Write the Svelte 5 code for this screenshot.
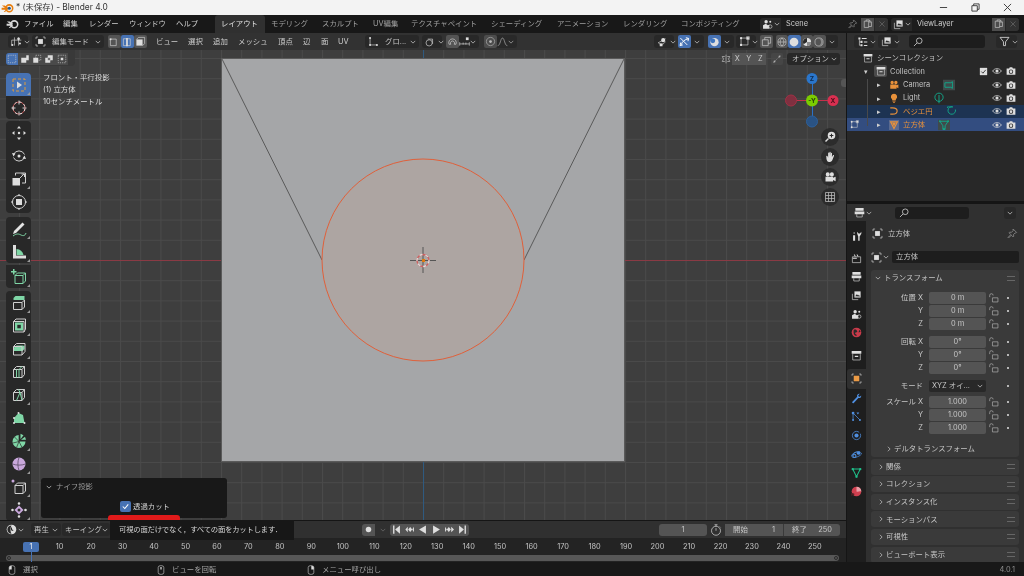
<script>
  const circ = (x, y, r) => `M${x - r} ${y}a${r} ${r} 0 1 0 ${2 * r} 0a${r} ${r} 0 1 0 ${-2 * r} 0z`;
  const cube = 'M2.5 5.5h8.5v8h-8.5zM2.5 5.5l3-3h8v8l-2.5 3M11 5.5l2.5-3';
  const G = {
    select: [['od', 'M2 2h12v12H2z'], ['fl', 'M6 4.5v7l5-3.5z']],
    cursor: [['rs', circ(8, 8, 6)], ['wd', circ(8, 8, 6)], ['st', 'M8 .5v4M8 11.5v4M.5 8h4M11.5 8h4']],
    move: [['fl', 'M8 1l2 2.5H6zM8 15l2-2.5H6zM1 8l2.5-2v4zM15 8l-2.5-2v4z' + circ(8, 8, 1.2)]],
    rotate: [['st', 'M2.5 6.5a6 6 0 0 1 11 0M13.5 9.5a6 6 0 0 1-11 0'], ['fl', 'M1 5l3.5 .5-2 3zM15 11l-3.5-.5 2-3z' + circ(8, 8, 1.5)]],
    scale: [['fl', 'M1.5 7h7.5v7.5H1.5z'], ['st', 'M4.5 4.5V2h10v10H11M9 7l4-4M10.5 3h3v3']],
    transform: [['st', circ(8, 8, 6.5)], ['fl', 'M5 5h6v6H5zM8 0l1.5 1.5h-3zM8 16l1.5-1.5h-3zM0 8l1.5-1.5v3zM16 8l-1.5-1.5v3z']],
    annotate: [['tw', 'M3 10L11.5 1.5l2 2L5 12l-3 1z'], ['gs', 'M2 15c4-3 6-2 8-1s4 1 5-2']],
    measure: [['fl', 'M2 1h3v10.5h10V14.5H2z'], ['gr', 'M5.5 5a8 8 0 0 1 7 6h-7z']],
    addcube: [['gs', 'M4 6.5h8v8H4zM4 6.5l2.5-2.5h8v8l-2.5 2.5M12 6.5l2.5-2.5'], ['gr', 'M2 0h1.5v2H5.5v1.5H3.5V5.5H2V3.5H0V2h2z']],
    extrude: [['gr', 'M2.5 3l2-2h9v4h-11z'], ['st', 'M2.5 7.5h8.5v7h-8.5zM11 7.5l2.5-2.5v7l-2.5 2.5']],
    inset: [['gr', 'M4 4.5h8v8H4z'], ['dk', 'M6.3 6.8h3.5v3.5H6.3z'], ['st', 'M2.5 3.5h10.5v10.5H2.5zM2.5 3.5l2.5-2.5h9.5v10l-1.5 3']],
    bevel: [['gr', 'M2.5 7l3-2.5h6l2 .5v3l-2 2H2.5z'], ['st', 'M2.5 5.5h8.5v8.5H2.5zM5.5 2.5h8.5v8l-3 3.5M2.5 5.5l3-3']],
    loop: [['st', cube], ['gs', 'M5.5 5.5v8M8 5.5v8M8 5.5l3-3']],
    knife: [['st', cube], ['gs', 'M7.5 2.5L9 5.5 5.5 13.5M9 5.5L11 13']],
    poly: [['gr', 'M3 8L7.5 3 12 5l1.5 8H3z'], ['fl', circ(3, 13, 1) + circ(13.5, 13, 1) + circ(7.5, 3, 1) + circ(3, 8, 1)]],
    spin: [['gr', 'M8 2a6.5 6.5 0 1 0 6.5 6.5H8zM9.5 .8v5.5l3-4zM10 6.8l4-3 1 3z'], ['dk2', 'M8 2v6.5L3.5 4M8 8.5L2 10M8 8.5L5.5 14.5M8 8.5l3 6']],
    smooth: [['pu', circ(8, 8, 6.5)], ['pd', 'M1.5 8c4 1.5 9 1.5 13 0M8 1.5c-1.5 4-1.5 9 0 13']],
    shrink: [['st', 'M4 6.5h8v8H4zM4 6.5l2.5-2.5h8v8l-2.5 2.5M12 6.5l2.5-2.5'], ['pu', circ(2, 2, 1.5)]],
    shear: [['pu', 'M8 3.5l4.5 4.5-4.5 4.5L3.5 8z'], ['fl', circ(8, 1.5, 1.3) + circ(8, 14.5, 1.3) + circ(1.5, 8, 1.3) + circ(14.5, 8, 1.3)], ['dk', circ(8, 8, 1.5)]],
    obj: [['fl', 'M4.5 4.5h7v7h-7z'], ['st', 'M1.5 4.5v-3h3M11.5 1.5h3v3M14.5 11.5v3h-3M4.5 14.5h-3v-3']],
    objo: [['ofl', 'M4 4h8v8H4z'], ['st', 'M1.5 4v-2.5H4M12 1.5h2.5V4M14.5 12v2.5H12M4 14.5H1.5V12']],
    editor: [['st', 'M1 14V6h14M5 2v12M11 2v12'], ['fl', circ(11, 4, 2) + circ(2, 13, 1.5) + circ(13, 11, 1.5)]],
    otype: [['fl', 'M2 2h3v3H2zM7 3h7v1.5H7zM5 7h3v3H5zM10 8h5v1.5h-5zM5 12h3v3H5zM10 13h5v1.5h-5z'], ['st', 'M3.5 5v8.5H5M3.5 8.5H5']],
    tools: [['fl', 'M3 6v8h3V6zM4 1.5v3h1v-3z'], ['fl', 'M10.5 8v6h2V8L15 4V1l-2 2.5h-2L9 1v3z']],
    render: [['st', 'M2 5.5h12v8.5H2z'], ['fl', 'M4 2h1.5l1.5 3H5.5zM8 2h1.5L11 5H9.5zM2.5 7h6v1.5h-6z']],
    output: [['fl', 'M2 1.5h12v4H2zM1 6.5h14v4H1z'], ['st', 'M4 10.5v4h8v-4']],
    vlayer: [['st', 'M2 5.5v8.5h8.5'], ['fl', 'M5 2h9v9H5z'], ['dk', 'M6 9l2.5-3 2 2 1-1 1.5 2.5z']],
    scene: [['fl', circ(6, 4, 2.5) + 'M1.5 14V9l4-2 3 2 2-.5V14z'], ['st', circ(12, 11, 2.5)], ['fl', circ(12, 4, 1.5)]],
    world: [['rf', circ(8, 8, 7)], ['dk', 'M4 4c3-1 4 0 5 2s-3 1-3 3 3 1 2 4c-3 0-5-3-4-9zM12 4l2 3-3 1z']],
    coll: [['st', 'M2.5 6v8.5h11V6'], ['fl', 'M1 1.5h14v4H1zM5.5 8.5h5v1.5h-5z']],
    wrench: [['bf', 'M14.8 3.5c.5 2.5-1.8 4.5-4 3.8L4 14.5c-1.2 1-3-.6-2-1.8L9 5.5C8 3 10 .8 12.8 1.2L10.5 3.5l.7 1.5 1.5.5z']],
    part: [['bs', 'M3 3v10M3 3l10 10'], ['bf', circ(3, 3, 2) + circ(3, 13, 1.5) + circ(13, 13, 1.5) + 'M8 2h4l-2 3z']],
    physics: [['bs', circ(8, 8, 6)], ['bf', circ(8, 8, 3)], ['dkb', 'M12 1l3 3-3 3z']],
    constr: [['bs', 'M1 10c2-7 12-7 14-4s-10 8-13 6 4-9 11-8'], ['bf', circ(5, 10, 3)], ['dk', circ(5, 10, 1.5)], ['bf', circ(11, 6, 2.5)]],
    data: [['gs2', 'M2.5 3h11L8 14z'], ['gf', circ(2.5, 3, 1.7) + circ(13.5, 3, 1.7) + circ(8, 14, 1.7)]],
    mat: [['mr', circ(8, 8, 7)], ['md', 'M8 1a7 7 0 0 1 7 7c-3-1.5-4 1-7 0z'], ['mk', 'M2.5 11.5c3-2 8-2 11 0a7 7 0 0 1-11 0z']],
    pin: [['sd', 'M9 1.5l5 5-1 1-1-.5-2.5 2.5.3 2.5-1 1-2.5-2.5-4 4-.8-.8 4-4L3 7l1-1 2.5.3L9 3.8l-.5-1z']],
    lock: [['lk', 'M1 6V3.5a2.5 2.5 0 0 1 5 0M5 7h8v6H5z']],
    eye: [['tw2', 'M1 8c3-5 11-5 14 0-3 5-11 5-14 0z'], ['fl', circ(8, 8, 2.5)]],
    cam: [['fl', 'M1 4h4l1-2h4l1 2h4v10H1z'], ['dk', circ(8, 9, 3.5)], ['fl', circ(8, 9, 2.2)]],
    check: [['fl', 'M1.5 1.5h13v13h-13z'], ['dks', 'M4 8l3 3 5-6']],
    search: [['ts', circ(10, 6, 4.5) + 'M6.5 9.5L1.5 14.5']],
    filter: [['ts', 'M1.5 2h13L9.5 8.5V14h-3V8.5z']],
    camera: [['of', circ(5, 4, 2.7) + circ(11, 4, 2.7) + 'M2 7h10v7H2zM12 8.5l3-1.5v6l-3-1.5z']],
    bulb: [['of', 'M8 1a5 5 0 0 1 3 9v1.5H5V10A5 5 0 0 1 8 1zM5.5 12.5h5v1h-5zM6.5 14.5h3v1h-3z']],
    curve: [['os', 'M2 3h4c4 0 7 1.5 7 5s-3 5-7 5H2']],
    meshtri: [['hb', 'M0 0h16v16H0z'], ['os', 'M2.5 3h11L8 13.5z'], ['of', 'M5 4.5h6L8 10.5z']],
    tagcam: [['hg', 'M0 1h16v14H0z'], ['ts2', 'M2.5 5h8l2-1.5v9l-2-1.5h-8z']],
    tagbulb: [['ts2', circ(8, 7, 5.5) + 'M8 4v11']],
    tagcurve: [['ts2', 'M12.5 6a5 5 0 1 1-3.5-3.5H3M3 2l-1.5 1 1.5 1']],
    tagmesh: [['hg', 'M0 1h16v14H0z'], ['ts2', 'M2.5 3h11L9.5 9v5h-3V9z'], ['tg', circ(2.5, 3, 1.2) + circ(13.5, 3, 1.2) + circ(8, 13, 1.2)]],
    mouseL: [['st', 'M3.5 4a4 3 0 0 1 4-3h1a4 3 0 0 1 4 3v8a4 3 0 0 1-4 3h-1a4 3 0 0 1-4-3z'], ['fl', 'M3.5 7V4a4 3 0 0 1 4-3v6z']],
    mouseM: [['st', 'M3.5 4a4 3 0 0 1 4-3h1a4 3 0 0 1 4 3v8a4 3 0 0 1-4 3h-1a4 3 0 0 1-4-3z'], ['fl', 'M7 3h2v4H7z']],
    mouseR: [['st', 'M3.5 4a4 3 0 0 1 4-3h1a4 3 0 0 1 4 3v8a4 3 0 0 1-4 3h-1a4 3 0 0 1-4-3z'], ['fl', 'M12.5 7V4a4 3 0 0 0-4-3v6z']],
    mode1: [['st', 'M2 4.5h8.5V14H2z'], ['fl', 'M1 3.5h2.5v2.5H1z']],
    mode2: [['st', 'M2 4h10v10H2z'], ['fl', 'M6 3h2.5v12H6z']],
    mode3: [['fl', 'M2 5h9v9H2z'], ['st', 'M2 5l3-3h9v9l-3 3']],
    box: [['sdash', 'M2 2h12v12H2z']],
    union: [['fl', 'M2 6h8V2h4v8h-4v4H2z']],
    sub: [['sdash', 'M6 2h8v8H6z'], ['fl', 'M2 6h8v8H2z']],
    diff: [['st', 'M6 6h4v4H6z'], ['fl', 'M6 2h8v8h-4V6H6zM2 6h4v4h4v4H2z']],
    inter: [['sdash', 'M2 2h12v12H2z'], ['fl', 'M6 6h4v4H6z']],
    orient: [['st', 'M3 13L3 3M3 13h10'], ['fl', circ(3, 3, 1.5) + circ(13, 13, 1.5) + circ(3, 13, 1.5)]],
    pivot: [['st', circ(6, 10, 4.5) + 'M4 4.5h7v7']],
    snap: [['st', 'M3 12a5.5 5.5 0 1 1 10 0M5.5 12a3 3 0 1 1 5 0M3 12h2.5M10.5 12H13']],
    snapb: [['st', 'M1 9v5M15 9v5M1 11.5h14M6 9.5v3M10 9.5v3'], ['fl', 'M10 2h4v4h-4z']],
    prop: [['st', circ(8, 8, 6)], ['fl', circ(8, 8, 2)]],
    falloff: [['st', 'M1 14c4 0 4-11 7-11s3 11 7 11']],
    vis: [['st', 'M1.5 10l11-6M2 10c3 3 8 3 10-2'], ['fl', circ(9, 6, 3) + 'M4 11h4v4H4z']],
    gizmo: [['ws', 'M2 3l10 10M3 13c2-5 5-8 11-9M10 2.5l4 1-1 4M2.5 9.5l-1 4.5 4-1']],
    overlay: [['fl', circ(8, 9, 6)], ['bl2', circ(5.5, 7, 3.5)]],
    editm: [['st', 'M3 3h10v10H3z'], ['fl', circ(3, 3, 1.7) + circ(13, 3, 1.7) + circ(3, 13, 1.7)], ['st', 'M11 1h4v4h-4z']],
    xray: [['st', 'M2 5.5h8.5V14H2zM5.5 2H14v8.5h-3.5M5.5 2v3.5']],
    wire: [['st', circ(8, 8, 6.5) + 'M1.5 8h13M8 1.5c-4 4-4 9 0 13M8 1.5c4 4 4 9 0 13']],
    solid: [['fl', circ(8, 8, 7)]],
    matp: [['fl', circ(8, 8, 6.5)], ['dk', 'M8 1.5A6.5 6.5 0 0 0 2.5 11.5L8 8z'], ['gy', 'M8 8h6.5a6.5 6.5 0 0 1-6.5 6.5z']],
    rend: [['st', circ(8, 8, 6.5)], ['gy', 'M8 1.5A6.5 6.5 0 0 1 8 14.5 8 8 0 0 0 8 1.5z']],
    sym: [['st', 'M8 1v14M6 4H2l2 4-2 4h4M10 4h4l-2 4 2 4h-4']],
    prot: [['sdash', 'M2 14L14 2'], ['fl', circ(4, 12, 1.5) + circ(12, 4, 1.5)]],
    zoom: [['fl', circ(10, 6, 5)], ['dk', 'M7.5 5.3h1.8V3.5h1.4v1.8h1.8v1.4h-1.8v1.8H9.3V6.7H7.5z'], ['th', 'M6 10L2 14']],
    hand: [['fl', 'M3 7c0-1 1.5-1 1.8 0l.7 2V3c0-1.2 1.5-1.2 1.6 0l.1 3.5V2c0-1.2 1.7-1.2 1.7 0v4.5l.3-3.5c.2-1 1.6-1 1.5.3L10.5 8l1.3-2c.6-1 2-.5 1.5.6l-2 5c-1 2.5-2.5 3-4.5 3-2.5 0-3-2-3.5-4z']],
    vcam: [['fl', circ(5, 4.5, 2.7) + circ(10.5, 4.5, 2.7) + 'M2 7.5h10V14H2zM12 9l3.5-1.5v6L12 12z']],
    ogrid: [['tg2', 'M2 2h12v12H2zM6 2v12M10 2v12M2 6h12M2 10h12']],
    clock: [['fl', circ(8, 8, 7)], ['dk', 'M8 2a6 6 0 0 0 0 12c-2-3-2-9 0-12z'], ['dks', 'M8 5v3.5l2.5 1']],
    rec: [['fl', circ(8, 8, 4)]],
    timer: [['st', circ(8, 9, 6) + 'M8 9V5.5M8 3V1M6 1h4M13 3.5l1 1']],
    jumpS: [['fl', 'M3 2h2v12H3zM13 2v12L6 8z']],
    keyP: [['fl', 'M2 8l3.5-4v8zM6 8l3-3.5L12 8l-3 3.5zM14.5 4v8L12 8z']],
    playR: [['fl', 'M13 2v12L3 8z']],
    playF: [['fl', 'M3 2v12l10-6z']],
    keyN: [['fl', 'M1.5 4v8L4 8zM4 8l3-3.5L10 8l-3 3.5zM10.5 4v8l4-4z']],
    jumpE: [['fl', 'M11 2h2v12h-2zM3 2v12l7-6z']],
    clo: [['tg2', 'M3 3l10 10M13 3L3 13']],
    copy: [['st', 'M2 3.5h7v10H2zM5 3.5V1.5h5l3.5 3.5v7H9M10 1.5V5h3.5']],
  };
  const menu = [['ファイル', 39], ['編集', 26], ['レンダー', 40], ['ウィンドウ', 47]];
  const tabs = [['レイアウト', 50, true], ['モデリング', 51], ['スカルプト', 51], ['UV編集', 38], ['テクスチャペイント', 80], ['シェーディング', 66], ['アニメーション', 66], ['レンダリング', 58], ['コンポジティング', 75]];
  const vmenu = [['ビュー', 32], ['選択', 25], ['追加', 25], ['メッシュ', 40], ['頂点', 25], ['辺', 18], ['面', 17], ['UV', 20]];
  const tgroups = [['select', 'cursor'], ['move', 'rotate', 'scale', 'transform'], ['annotate', 'measure'], ['addcube'], ['extrude', 'inset', 'bevel', 'loop', 'knife', 'poly', 'spin', 'smooth', 'shrink', 'shear']];
  const noCorner = ['cursor', 'move', 'rotate', 'transform', 'poly'];
  const rows = [
    { name: 'シーンコレクション', icon: 'coll', indent: 14, noArrow: true },
    { name: 'Collection', icon: 'coll', indent: 17, arrow: '▾', box: true, check: true },
    { name: 'Camera', icon: 'camera', indent: 30, arrow: '▸', tag: 'tagcam' },
    { name: 'Light', icon: 'bulb', indent: 30, arrow: '▸', tag: 'tagbulb' },
    { name: 'ベジエ円', icon: 'curve', indent: 30, arrow: '▸', tag: 'tagcurve', cls: 'sel', orange: true },
    { name: '立方体', icon: 'meshtri', indent: 30, arrow: '▸', tag: 'tagmesh', cls: 'act', orange: true },
  ];
  const ptabs = [['tools', 'a'], ['render', 'b'], ['output', 'c'], ['vlayer', 'c'], ['scene', 'c'], ['world', 'c'], ['coll', 'd'], ['objo', 'e'], ['wrench', 'f'], ['part', 'c'], ['physics', 'c'], ['constr', 'c'], ['data', 'c'], ['mat', 'c']];
  const xform = [
    [['位置 X', '0 m'], ['Y', '0 m'], ['Z', '0 m']],
    [['回転 X', '0°'], ['Y', '0°'], ['Z', '0°']],
  ];
  const scale = [['スケール X', '1.000'], ['Y', '1.000'], ['Z', '1.000']];
  const panels = ['関係', 'コレクション', 'インスタンス化', 'モーションパス', '可視性', 'ビューポート表示'];
  const marks = [10, 20, 30, 40, 50, 60, 70, 80, 90, 100, 110, 120, 130, 140, 150, 160, 170, 180, 190, 200, 210, 220, 230, 240, 250];
  const transport = ['jumpS', 'keyP', 'playR', 'playF', 'keyN', 'jumpE'];
  const fx = (f) => 59.6 + (f - 10) * 3.147;
  const chev = 'M1 1l3 3 3-3';
</script>

{#snippet g(name, size = 12)}
  <svg class="g" viewBox="0 0 16 16" width={size} height={size}>
    {#each G[name] as [c, d]}<path class={c} {d} />{/each}
  </svg>
{/snippet}
{#snippet v()}
  <svg class="chev" viewBox="0 0 8 5" width="6" height="4"><path d={chev} /></svg>
{/snippet}
{#snippet logo(col, eye)}
  <svg viewBox="0 0 16 14" width="13" height="11">
    <path fill={col} d="M.5 7.2h4.3L.8 4.3h3.7L8.5 7v2.5L4.8 12.8H3.2L5.8 9.8H.5z" />
    <circle fill="none" stroke={col} stroke-width="2" cx="10.3" cy="8" r="4.3" />
    <circle fill={eye} cx="10.3" cy="8" r="2" />
  </svg>
{/snippet}
{#snippet lockrow()}
  <span class="lockc">{@render g('lock', 11)}</span><i class="dot"></i>
{/snippet}

<div class="app">
  <header class="title">
    {@render logo('#e87d0d', '#265787')}
    <span class="ttext">* (未保存) - Blender 4.0</span>
    <div class="winctl">
      <svg viewBox="0 0 10 10" width="9" height="9"><path d="M1 5h8" /></svg>
      <svg viewBox="0 0 10 10" width="9" height="9"><path d="M1 3h6v6H1zM3 3V1h6v6H7" /></svg>
      <svg viewBox="0 0 10 10" width="9" height="9"><path d="M1 1l8 8M9 1l-8 8" /></svg>
    </div>
  </header>

  <nav class="topbar">
    <div class="blogo">{@render logo('#d8d8d8', '#181818')}</div>
    {#each menu as [t, w]}<span class="mi" style:width="{w}px">{t}</span>{/each}
    <span class="mi help">ヘルプ</span>
    <div class="tabs">
      {#each tabs as [t, w, on]}<span class="tab" class:on style:width="{w}px">{t}</span>{/each}
    </div>
    <div class="selector scene">
      <span class="selic">{@render g('scene', 11)}{@render v()}</span>
      <span class="selname">Scene</span>
      <span class="selpin">{@render g('pin', 10)}</span>
      <span class="selbtn">{@render g('copy', 10)}</span>
      <span class="selbtn dim">{@render g('clo', 8)}</span>
    </div>
    <div class="selector layer">
      <span class="selic">{@render g('vlayer', 11)}{@render v()}</span>
      <span class="selname">ViewLayer</span>
      <span class="selbtn">{@render g('copy', 10)}</span>
      <span class="selbtn dim">{@render g('clo', 8)}</span>
    </div>
  </nav>

  <div class="main">
    <div class="left">
      <section class="viewport">
        <svg class="scene3d" viewBox="0 33 846 487" width="846" height="487">
          <defs>
            <pattern id="grid" x="625" y="58" width="20.2" height="20.2" patternUnits="userSpaceOnUse">
              <path d="M0 .5H20.2M.5 0V20.2" fill="none" stroke="#4a4a4a" stroke-width="1" />
            </pattern>
          </defs>
          <rect x="0" y="33" width="846" height="487" fill="url(#grid)" />
          <path d="M0 260.5H221M625 260.5H846" stroke="#8a3a44" stroke-width="1" />
          <path d="M423.5 50V58M423.5 462V520" stroke="#2f5a80" stroke-width="1" />
          <rect x="221.5" y="58.5" width="403" height="403" fill="#a5a6a8" stroke="#5a5a5a" stroke-width="1" />
          <path d="M222 59L322 260M624 59L524 260" fill="none" stroke="#5a5a5a" stroke-width="1" />
          <circle cx="423" cy="260" r="101" fill="#ada5a2" stroke="#e0603a" stroke-width="1" />
          <path d="M423 247V273M410 260.5H436" stroke="#555" stroke-width="1" />
          <circle cx="423" cy="260.5" r="6" fill="none" stroke="#d06060" stroke-width="1.3" />
          <circle cx="423" cy="260.5" r="6" fill="none" stroke="#dddddd" stroke-width="1.3" stroke-dasharray="3 3" />
          <rect x="422" y="259" width="3" height="3" fill="#e07a10" />
          <path d="M791 100.5H833" stroke="#c5304a" stroke-width="1" />
          <path d="M812.5 78V121" stroke="#2a72c8" stroke-width="1" />
          <circle cx="791" cy="100.5" r="5.5" fill="#803040" stroke="#a03045" />
          <circle cx="812" cy="121.5" r="5.5" fill="#2a5384" stroke="#2c5f9a" />
          <circle cx="812" cy="78.5" r="5.5" fill="#2a76cc" />
          <circle cx="833" cy="100.5" r="5.5" fill="#d92f50" />
          <circle cx="812" cy="100.5" r="6" fill="#7bcc00" />
        </svg>

        <div class="vhead">
          <span class="btn first">{@render g('editor', 11)}{@render v()}</span>
          <span class="btn modesel">{@render g('obj', 11)}<span class="bl">編集モード</span>{@render v()}</span>
          <span class="seg">
            <span class="segb">{@render g('mode1', 11)}</span>
            <span class="segb on">{@render g('mode2', 11)}</span>
            <span class="segb">{@render g('mode3', 11)}</span>
          </span>
          <span class="vmenu">
            {#each vmenu as [t, w]}<span class="vm" style:width="{w}px">{t}</span>{/each}
          </span>
          <span class="btn orient">{@render g('orient', 11)}<span class="bl">グロ...</span>{@render v()}</span>
          <span class="btn pivot">{@render g('pivot', 11)}{@render v()}</span>
          <span class="btn snap"><span class="tog">{@render g('snap', 11)}</span>{@render g('snapb', 11)}{@render v()}</span>
          <span class="btn propb"><span class="tog">{@render g('prop', 11)}</span>{@render g('falloff', 11)}{@render v()}</span>
          <span class="spacer"></span>
          <span class="btn vis">{@render g('vis', 11)}{@render v()}</span>
          <span class="seg2"><span class="segb on">{@render g('gizmo', 11)}</span><span class="tailv">{@render v()}</span></span>
          <span class="seg2"><span class="segb on">{@render g('overlay', 11)}</span><span class="tailv">{@render v()}</span></span>
          <span class="btn editm">{@render g('editm', 11)}{@render v()}</span>
          <span class="segb xray">{@render g('xray', 11)}</span>
          <span class="shade">
            <span class="segb">{@render g('wire', 10)}</span>
            <span class="segb on">{@render g('solid', 10)}</span>
            <span class="segb">{@render g('matp', 10)}</span>
            <span class="segb">{@render g('rend', 10)}</span>
            <span class="tailv">{@render v()}</span>
          </span>
        </div>

        <div class="selbg">
          <div class="selrow">
            <span class="sb on">{@render g('box', 10)}</span>
            <span class="sb">{@render g('union', 10)}</span>
            <span class="sb">{@render g('sub', 10)}</span>
            <span class="sb">{@render g('diff', 10)}</span>
            <span class="sb">{@render g('inter', 10)}</span>
          </div>
        </div>

        <div class="toolopts">
          {@render g('sym', 10)}
          <span class="xyz">X</span><span class="xyz">Y</span><span class="xyz">Z</span>
          <span class="prot">{@render g('prot', 10)}</span>
          <span class="optbtn">オプション{@render v()}</span>
        </div>

        <div class="info">
          <div>フロント・平行投影</div>
          <div>(1) 立方体</div>
          <div>10センチメートル</div>
        </div>

        <div class="toolbar">
          {#each tgroups as grp}
            <div class="tgroup">
              {#each grp as t}
                <span class="tool" class:on={t === 'select'} class:corner={!noCorner.includes(t)}>{@render g(t, 16)}</span>
              {/each}
            </div>
          {/each}
        </div>

        <span class="gz">-Y</span>
        <span class="gl z">Z</span>
        <span class="gl x">X</span>
        <i class="side"></i>
        <div class="nav">
          <span class="nb">{@render g('zoom', 12)}</span>
          <span class="nb">{@render g('hand', 12)}</span>
          <span class="nb">{@render g('vcam', 12)}</span>
          <span class="nb">{@render g('ogrid', 12)}</span>
        </div>

        <div class="opanel">
          <div class="ophead">{@render v()}<span>ナイフ投影</span></div>
          <label class="opcheck"><span class="cb">{@render g('check', 11)}</span>透過カット</label>
        </div>
        <div class="redbar"></div>
      </section>

      <section class="timeline">
        <div class="thead">
          <span class="tclock">{@render g('clock', 11)}{@render v()}</span>
          <span class="tbtn play">再生{@render v()}</span>
          <span class="tbtn keying">キーイング{@render v()}</span>
          <span class="trans">
            <span class="recb">{@render g('rec', 11)}</span>
            <span class="recv">{@render v()}</span>
            <span class="tgrp">
              {#each transport as t}<span class="tb">{@render g(t, 11)}</span>{/each}
            </span>
          </span>
          <span class="spacer"></span>
          <span class="cur">1</span>
          <span class="tim">{@render g('timer', 12)}</span>
          <span class="range"><span>開始</span><span>1</span></span>
          <span class="range r2"><span>終了</span><span>250</span></span>
        </div>
        <div class="ruler">
          <span class="cf">1</span>
          {#each marks as m}<span class="mk" style:left="{fx(m)}px">{m}</span>{/each}
          <div class="track"><i class="knob"></i><i class="knob end"></i></div>
          <i class="cfl"></i>
        </div>
      </section>
      <div class="tip">可視の面だけでなく，すべての面をカットします．</div>
    </div>

    <aside class="right">
      <section class="outliner">
        <div class="ohead">
          <span class="btn o1">{@render g('otype', 11)}{@render v()}</span>
          <span class="btn o2">{@render g('vlayer', 11)}{@render v()}</span>
          <span class="osearch">{@render g('search', 10)}</span>
          <span class="btn o3">{@render g('filter', 11)}{@render v()}</span>
        </div>
        <div class="list">
          {#each rows as r}
            <div class="row {r.cls ?? ''}" style:padding-left="{r.indent}px">
              {#if r.cls === 'act'}<span class="modeic">{@render g('editm', 9)}</span>{/if}
              {#if !r.noArrow}<span class="arr">{r.arrow}</span>{/if}
              <span class="ric" class:boxed={r.box}>{@render g(r.icon, 10)}</span>
              <span class="rn" class:orange={r.orange} class:plain={!r.orange}>{r.name}</span>
              {#if r.tag}<span class="rtag">{@render g(r.tag, 12)}</span>{/if}
              <span class="spacer"></span>
              {#if !r.noArrow}
                {#if r.check}<span class="rchk">{@render g('check', 9)}</span>{/if}
                <span class="reye">{@render g('eye', 10)}</span>
                <span class="rcam">{@render g('cam', 10)}</span>
              {/if}
            </div>
          {/each}
          <i class="tree"></i>
        </div>
      </section>

      <section class="props">
        <div class="phead">
          <span class="pbtn">{@render g('output', 11)}{@render v()}</span>
          <span class="psearch">{@render g('search', 10)}</span>
          <span class="pv">{@render v()}</span>
        </div>
        <div class="pbody">
          <div class="ptabs">
            {#each ptabs as [t, c]}
              <span class="ptab t{c}">{@render g(t, 11)}</span>
            {/each}
          </div>
          <div class="pcontent">
            <div class="crumb">{@render g('obj', 11)}<span>立方体</span><span class="spacer"></span>{@render g('pin', 11)}</div>
            <div class="namerow">
              <span class="nameic">{@render g('obj', 11)}{@render v()}</span>
              <span class="namef">立方体</span>
            </div>
            <div class="panel xf">
              <div class="phd">{@render v()}<span>トランスフォーム</span><span class="spacer"></span><i class="grip"></i></div>
              <div class="xfbody">
                {#each xform as grp}
                  <div class="fgroup xg">
                    {#each grp as [l, val]}
                      <span class="lab">{l}</span><span class="fld">{val}</span>{@render lockrow()}
                    {/each}
                  </div>
                {/each}
                <div class="fgroup modeg">
                  <span class="lab">モード</span><span class="dd">XYZ オイ...{@render v()}</span><span class="lockc"></span><i class="dot"></i>
                </div>
                <div class="fgroup">
                  {#each scale as [l, val]}
                    <span class="lab">{l}</span><span class="fld">{val}</span>{@render lockrow()}
                  {/each}
                </div>
              </div>
              <div class="delta"><svg class="chev" viewBox="0 0 5 8" width="4" height="6"><path d="M1 1l3 3-3 3" /></svg><span>デルタトランスフォーム</span></div>
            </div>
            {#each panels as p}
              <div class="panel closed">
                <svg class="chev" viewBox="0 0 5 8" width="4" height="6"><path d="M1 1l3 3-3 3" /></svg>
                <span>{p}</span><span class="spacer"></span><i class="grip"></i>
              </div>
            {/each}
          </div>
        </div>
      </section>
    </aside>
  </div>

  <footer class="status">
    <span class="hint h1">{@render g('mouseL', 10)}<span>選択</span></span>
    <span class="hint h2">{@render g('mouseM', 10)}<span>ビューを回転</span></span>
    <span class="hint h3">{@render g('mouseR', 10)}<span>メニュー呼び出し</span></span>
    <span class="spacer"></span>
    <span class="ver">4.0.1</span>
  </footer>
</div>

<style>
  :global(body) { margin: 0; background: #181818; }
  .app {
    width: 1024px; height: 576px; overflow: hidden; display: flex; flex-direction: column;
    font-family: Inter, "Noto Sans CJK JP", sans-serif; font-size: 7.4px; line-height: 1; color: #c6c6c6;
    background: #151515; filter: blur(.3px); white-space: nowrap;
  }
  .spacer { flex: 1; }
  .g { display: block; flex: none; fill: none; }
  .chev { flex: none; fill: none; stroke: #b8b8b8; stroke-width: 1.1; }

  /* glyph paint */
  .st { fill: none; stroke: #cfcfcf; stroke-width: 1; }
  .fl { fill: #dedede; }
  .tw { fill: #e4e4e4; stroke: none; }
  .ts { fill: none; stroke: #d0d0d0; stroke-width: 1.3; }
  .ws { fill: none; stroke: #fff; stroke-width: 1.4; }
  .dk { fill: #2a2a2a; }
  .dk2 { fill: none; stroke: #2a2a2a; stroke-width: .7; }
  .dks { fill: none; stroke: #2a2a2a; stroke-width: 1.5; }
  .od { fill: none; stroke: #e09a3a; stroke-width: 1; stroke-dasharray: 3 2; }
  .rs { fill: none; stroke: #c85050; stroke-width: 1; }
  .wd { fill: none; stroke: #e6e6e6; stroke-width: 1; stroke-dasharray: 2.5 2.5; }
  .gr { fill: #7fd6a6; }
  .gs { fill: none; stroke: #7fd6a6; stroke-width: 1; }
  .pu { fill: #c9a8dc; }
  .pd { fill: none; stroke: #5a4a66; stroke-width: .8; }
  .gy { fill: #8a8a8a; }
  .sdash { fill: none; stroke: #cfcfcf; stroke-width: 1; stroke-dasharray: 2 1.5; }
  .ofl { fill: #ec9b45; }
  .rf { fill: #c93a4a; }
  .bf { fill: #4f8fe0; }
  .bs { fill: none; stroke: #4f8fe0; stroke-width: 1.1; }
  .dkb { fill: #1f1f1f; }
  .gs2 { fill: none; stroke: #1fc08a; stroke-width: 1.5; }
  .gf { fill: #1fc08a; }
  .mr { fill: #d04050; }
  .md { fill: #e8a0a8; }
  .mk { fill: #4a2024; }
  .sd { fill: none; stroke: #9a9a9a; stroke-width: 1; }
  .lk { fill: none; stroke: #b0b0b0; stroke-width: 1; }
  .tw2 { fill: none; stroke: #dedede; stroke-width: 1.2; }
  .of { fill: #e8913a; }
  .os { fill: none; stroke: #e8913a; stroke-width: 1.8; }
  .hb { fill: #5a6a90; }
  .hg { fill: #3f4a4a; }
  .ts2 { fill: none; stroke: #12a589; stroke-width: 1.3; }
  .tg { fill: #12a589; }
  .tg2 { fill: none; stroke: #bdbdbd; stroke-width: 1; }
  .th { fill: none; stroke: #dedede; stroke-width: 2; }
  .bl2 { fill: #3f75bd; }

  /* title bar */
  .title { height: 15px; flex: none; background: #f3f3f3; display: flex; align-items: center; padding-left: 1px; color: #333; }
  .title > svg { flex: none; }
  .ttext { margin-left: 2px; font-size: 8.4px; }
  .winctl { margin-left: auto; display: flex; gap: 23px; padding-right: 12px; }
  .winctl path { fill: none; stroke: #333; stroke-width: 1; }

  /* top bar */
  .topbar { height: 18px; flex: none; background: #181818; display: flex; align-items: center; }
  .blogo { width: 24px; padding-left: 6px; box-sizing: border-box; flex: none; }
  .mi { flex: none; color: #d0d0d0; }
  .mi.help { width: 39px; }
  .tabs { display: flex; height: 100%; flex: none; }
  .tab { box-sizing: border-box; padding-left: 6px; display: flex; align-items: center; color: #a0a0a0; flex: none; }
  .tab.on { background: #303030; color: #e0e0e0; border-radius: 3px 3px 0 0; }
  .selector { display: flex; align-items: center; height: 13px; background: #282828; border-radius: 3px; flex: none; }
  .selector.scene { margin-left: 10px; width: 128px; }
  .selector.layer { margin-left: 3px; width: 128px; }
  .selic { width: 21px; display: flex; align-items: center; justify-content: center; gap: 1px; flex: none; }
  .selname { flex: 1; background: #1d1d1d; height: 100%; display: flex; align-items: center; padding-left: 5px; color: #cfcfcf; }
  .selpin { width: 13px; background: #1d1d1d; height: 100%; display: flex; align-items: center; flex: none; }
  .selbtn { width: 13px; height: 100%; background: #4d4d4d; display: flex; align-items: center; justify-content: center; flex: none; }
  .selbtn.dim { background: #3a3a3a; border-radius: 0 3px 3px 0; margin-left: 1px; opacity: .6; }

  /* layout */
  .main { flex: 1; min-height: 0; display: flex; gap: 1px; }
  .left { width: 846px; flex: none; display: flex; flex-direction: column; position: relative; gap: 1px; }
  .right { flex: 1; min-width: 0; display: flex; flex-direction: column; gap: 3px; }

  /* viewport */
  .viewport { position: relative; height: 487px; flex: none; background: #3e3e3e; overflow: hidden; }
  .scene3d { position: absolute; inset: 0; display: block; }
  .vhead { position: relative; height: 17px; background: #323232; display: flex; align-items: center; padding-left: 8px; padding-right: 8px; }
  .btn { display: inline-flex; align-items: center; gap: 2px; height: 13px; background: #282828; border-radius: 3px; box-sizing: border-box; padding: 0 3px; flex: none; }
  .btn.first { width: 20px; }
  .btn.modesel { width: 72px; margin-left: 4px; }
  .bl { flex: 1; padding-left: 4px; }
  .seg { display: flex; margin-left: 4px; width: 39px; flex: none; }
  .segb { width: 13px; height: 13px; background: #545454; display: flex; align-items: center; justify-content: center; flex: none; border-radius: 2px; }
  .segb.on { background: #4772b3; }
  .vmenu { display: flex; margin-left: 9px; flex: none; }
  .vm { flex: none; color: #cdcdcd; }
  .btn.orient { margin-left: 7px; width: 54px; }
  .btn.pivot { margin-left: 3px; width: 20px; }
  .btn.snap { margin-left: 4px; width: 33px; padding: 0; gap: 0; }
  .btn.propb { margin-left: 5px; width: 33px; padding: 0; gap: 0; opacity: .8; }
  .tog { width: 13px; height: 13px; background: #545454; display: flex; align-items: center; justify-content: center; border-radius: 2px; flex: none; }
  .btn.vis { width: 20px; }
  .seg2 { display: flex; align-items: center; background: #282828; border-radius: 3px; width: 26px; margin-left: 4px; flex: none; }
  .tailv { width: 12.5px; display: flex; justify-content: center; flex: none; }
  .btn.editm { width: 20px; margin-left: 2px; }
  .segb.xray { margin-left: 4px; }
  .shade { display: flex; align-items: center; background: #282828; border-radius: 3px; margin-left: 3px; flex: none; }
  .shade .segb { width: 12.5px; }

  .selbg { position: absolute; left: 0; top: 17px; width: 75px; height: 16px; background: #393939; border-radius: 0 0 4px 0; }
  .selrow { margin: 3px 0 0 6px; display: flex; width: 62px; height: 12px; }
  .sb { width: 12.4px; height: 12px; background: #4a4a4a; display: flex; align-items: center; justify-content: center; }
  .sb.on { background: #4772b3; border-radius: 3px 0 0 3px; }
  .toolopts { position: absolute; right: 6px; top: 18px; display: flex; align-items: center; height: 15px; }
  .xyz { width: 11.5px; height: 12px; background: #545454; display: flex; align-items: center; justify-content: center; color: #c8c8c8; }
  .toolopts .g:first-child { margin-right: 1px; }
  .prot { width: 12px; height: 12px; background: #4a4a4a; display: flex; align-items: center; justify-content: center; margin-left: 5px; opacity: .7; border-radius: 2px; }
  .optbtn { display: flex; align-items: center; justify-content: space-between; width: 53px; height: 12px; margin-left: 4px; background: #282828; border-radius: 3px; padding: 0 3px 0 5px; box-sizing: border-box; }

  .info { position: absolute; left: 43px; top: 41px; display: flex; flex-direction: column; gap: 4.4px; color: #dedede; }
  .toolbar { position: absolute; left: 6px; top: 40px; display: flex; flex-direction: column; }
  .tgroup { display: flex; flex-direction: column; }
  .tgroup:nth-child(2) { margin-top: 2px; }
  .tgroup:nth-child(3) { margin-top: 4px; }
  .tgroup:nth-child(4) { margin-top: 2px; }
  .tgroup:nth-child(5) { margin-top: 3px; }
  .tool { width: 25px; height: 23px; background: #282828; display: flex; align-items: center; justify-content: center; position: relative; }
  .tgroup .tool:first-child { border-radius: 4px 4px 0 0; }
  .tgroup .tool:last-child { border-radius: 0 0 4px 4px; }
  .tool.on { background: #4772b3; }
  .tool.corner::after { content: ""; position: absolute; right: 1px; bottom: 1px; border-style: solid; border-width: 0 0 3px 3px; border-color: transparent transparent #9a9a9a transparent; }

  .gz, .gl { position: absolute; font-size: 6.5px; font-weight: 700; transform: translate(-50%, -50%); }
  .gz { left: 812px; top: 67.5px; color: #27400a; }
  .gl.z { left: 812px; top: 45.5px; color: #0c2a50; }
  .gl.x { left: 833px; top: 67.5px; color: #4a0d1a; }
  .side { position: absolute; left: 841px; top: 46px; width: 5px; height: 8px; background: #555; border-radius: 3px 0 0 3px; }
  .nav { position: absolute; left: 821px; top: 95px; display: flex; flex-direction: column; gap: 2px; }
  .nb { width: 18px; height: 18px; border-radius: 50%; background: #2c2c2c; display: flex; align-items: center; justify-content: center; }

  .opanel { position: absolute; left: 41px; top: 445px; width: 186px; height: 40px; background: #181818; border-radius: 3px; }
  .ophead { display: flex; align-items: center; gap: 4px; padding: 5px 0 0 5px; color: #9a9a9a; }
  .opcheck { position: absolute; left: 79px; top: 23px; display: flex; align-items: center; gap: 2px; color: #d4d4d4; }
  .cb { width: 11px; height: 11px; background: #4772b3; border-radius: 2px; display: block; }
  .cb :global(path.fl) { fill: #4772b3; }
  .cb :global(path.dks) { stroke: #fff; }
  .redbar { position: absolute; left: 108px; top: 482px; width: 72px; height: 6px; background: #e01a1a; border-radius: 3px 3px 0 0; }
  .tip { position: absolute; left: 110px; top: 487px; width: 184px; height: 20px; background: #171717; color: #d4d4d4; box-sizing: border-box; padding: 6px 0 0 9px; letter-spacing: -.25px; }

  /* timeline */
  .timeline { flex: 1; display: flex; flex-direction: column; min-height: 0; }
  .thead { height: 17px; background: #303030; display: flex; align-items: center; padding: 0 6px; flex: none; }
  .tclock { display: flex; align-items: center; gap: 1px; width: 18px; flex: none; }
  .tbtn { display: flex; align-items: center; justify-content: space-between; height: 13px; background: #282828; box-sizing: border-box; padding: 0 3px; border-radius: 3px; flex: none; }
  .tbtn.play { width: 30px; margin-left: 7px; }
  .tbtn.keying { width: 48px; margin-left: 1px; }
  .trans { display: flex; align-items: center; margin-left: 252px; flex: none; }
  .recb { width: 13px; height: 12px; background: #545454; display: flex; align-items: center; justify-content: center; border-radius: 3px 0 0 3px; }
  .recv { width: 15px; display: flex; justify-content: center; opacity: .4; }
  .tgrp { display: flex; width: 79px; background: #545454; height: 12px; border-radius: 3px; }
  .tb { width: 13.16px; display: flex; align-items: center; justify-content: center; }
  .cur { width: 48px; height: 12px; background: #545454; border-radius: 3px; display: flex; align-items: center; justify-content: center; flex: none; }
  .tim { width: 18px; display: flex; justify-content: center; flex: none; }
  .range { display: flex; justify-content: space-between; align-items: center; width: 58px; height: 12px; background: #545454; box-sizing: border-box; padding: 0 8px; flex: none; }
  .range.r2 { width: 57px; border-radius: 0 3px 3px 0; border-left: 1px solid #3a3a3a; }
  .ruler { flex: 1; position: relative; background: #232323; }
  .cf { position: absolute; left: 23px; top: 4px; width: 16px; height: 10px; background: #4772b3; border-radius: 2px; display: flex; align-items: center; justify-content: center; color: #eee; z-index: 1; }
  .mk { position: absolute; top: 5px; transform: translateX(-50%); color: #c4c4c4; }
  .track { position: absolute; left: 6px; right: 7px; top: 17px; height: 6px; background: #575757; border-radius: 3px; display: flex; justify-content: space-between; align-items: center; padding: 0 1px; box-sizing: border-box; }
  .knob { width: 4px; height: 4px; border-radius: 50%; border: 1px solid #2a2a2a; box-sizing: border-box; display: block; }
  .cfl { position: absolute; left: 31px; top: 13px; width: 1px; bottom: 0; background: #4772b3; }

  /* outliner */
  .outliner { height: 168px; flex: none; background: #282828; display: flex; flex-direction: column; }
  .ohead { height: 17px; background: #303030; display: flex; align-items: center; flex: none; padding-left: 7px; }
  .btn.o1 { width: 20px; }
  .btn.o2 { width: 20px; margin-left: 4px; }
  .osearch { width: 76px; height: 13px; background: #1d1d1d; border-radius: 3px; margin-left: 11px; display: flex; align-items: center; padding-left: 4px; box-sizing: border-box; }
  .btn.o3 { margin-left: 11px; width: 21px; }
  .list { position: relative; padding-top: 1.5px; }
  .row { height: 13.3px; display: flex; align-items: center; box-sizing: border-box; padding-right: 8px; position: relative; }
  .row.sel { background: #1d3352; }
  .row.act { background: #334d80; }
  .arr { width: 10px; flex: none; font-size: 7px; color: #cfcfcf; }
  .ric { width: 13px; height: 12px; display: flex; align-items: center; justify-content: center; flex: none; border-radius: 2px; }
  .ric.boxed { background: #4a4a4a; }
  .rn { margin-left: 3px; }
  .plain { color: #c0c0c0; }
  .orange { color: #e8913a; }
  .rtag { margin-left: 13px; }
  .rchk { margin-right: 4px; }
  .reye { margin-right: 4px; }
  .modeic { position: absolute; left: 3px; top: 2px; }
  .tree { position: absolute; left: 19.5px; top: 29px; height: 47px; width: 1px; background: #4a4a4a; }

  /* properties */
  .props { flex: 1; min-height: 0; display: flex; flex-direction: column; background: #303030; }
  .phead { height: 17px; display: flex; align-items: center; padding-left: 7px; flex: none; }
  .pbtn { display: flex; align-items: center; gap: 1px; width: 20px; flex: none; }
  .psearch { width: 74px; height: 12px; background: #1d1d1d; border-radius: 3px; margin-left: 21px; display: flex; align-items: center; padding-left: 4px; box-sizing: border-box; flex: none; }
  .pv { margin-left: 35px; width: 12px; height: 12px; background: #282828; border-radius: 3px; display: flex; align-items: center; justify-content: center; flex: none; }
  .pbody { flex: 1; display: flex; min-height: 0; }
  .ptabs { width: 19px; background: #1e1e1e; flex: none; display: flex; flex-direction: column; align-items: center; padding-top: 6px; box-sizing: border-box; }
  .ptab { height: 18.7px; width: 19px; display: flex; align-items: center; justify-content: center; flex: none; }
  .ptab.tb { margin-top: 3px; }
  .ptab.td { margin-top: 4px; }
  .ptab.te { margin-top: 4px; background: #303030; height: 20px; border-radius: 3px 0 0 3px; }
  .pcontent { flex: 1; min-width: 0; padding: 0 5px; overflow: hidden; }
  .crumb { height: 25px; display: flex; align-items: center; gap: 5px; padding: 0 1px; }
  .namerow { display: flex; align-items: center; height: 12px; margin-top: 5px; }
  .nameic { width: 21px; display: flex; align-items: center; gap: 1px; flex: none; }
  .namef { flex: 1; height: 12px; background: #1d1d1d; border-radius: 2px; display: flex; align-items: center; padding-left: 4px; }
  .panel { background: #3a3a3a; border-radius: 3px; }
  .panel.xf { margin-top: 7px; height: 187px; box-sizing: border-box; }
  .phd { height: 16px; display: flex; align-items: center; gap: 3px; padding: 0 4px; }
  .grip { width: 8px; height: 3px; border-top: 1px solid #666; border-bottom: 1px solid #666; flex: none; }
  .xfbody { padding-top: 6px; display: flex; flex-direction: column; }
  .fgroup { display: grid; grid-template-columns: 55px 57px 15px 6px; column-gap: 3px; row-gap: 1px; grid-auto-rows: 12px; align-items: center; padding-bottom: 5px; }
  .fgroup.xg { padding-bottom: 6px; }
  .modeg { padding-bottom: 4px; }
  .lab { text-align: right; color: #c8c8c8; padding-right: 3px; }
  .fld { background: #545454; height: 12px; display: flex; align-items: center; justify-content: center; border-radius: 2px; }
  .dd { background: #282828; height: 12px; border-radius: 2px; display: flex; align-items: center; justify-content: space-between; padding: 0 3px; box-sizing: border-box; }
  .lockc { display: flex; align-items: center; }
  .dot { width: 2px; height: 2px; border-radius: 50%; background: #e0e0e0; display: block; }
  .delta { display: flex; align-items: center; gap: 3px; padding: 6px 0 0 16px; }
  .panel.closed { margin-top: 1.6px; height: 16px; display: flex; align-items: center; gap: 3px; padding: 0 4px 0 8px; }

  /* status */
  .status { height: 14px; flex: none; background: #181818; display: flex; align-items: center; color: #a4a4a4; padding-top: 1px; box-sizing: border-box; }
  .hint { display: flex; align-items: center; gap: 6px; flex: none; }
  .h1 { margin-left: 7px; width: 149px; }
  .h2 { width: 150px; }
  .ver { margin-right: 9px; color: #8c8c8c; }
</style>
